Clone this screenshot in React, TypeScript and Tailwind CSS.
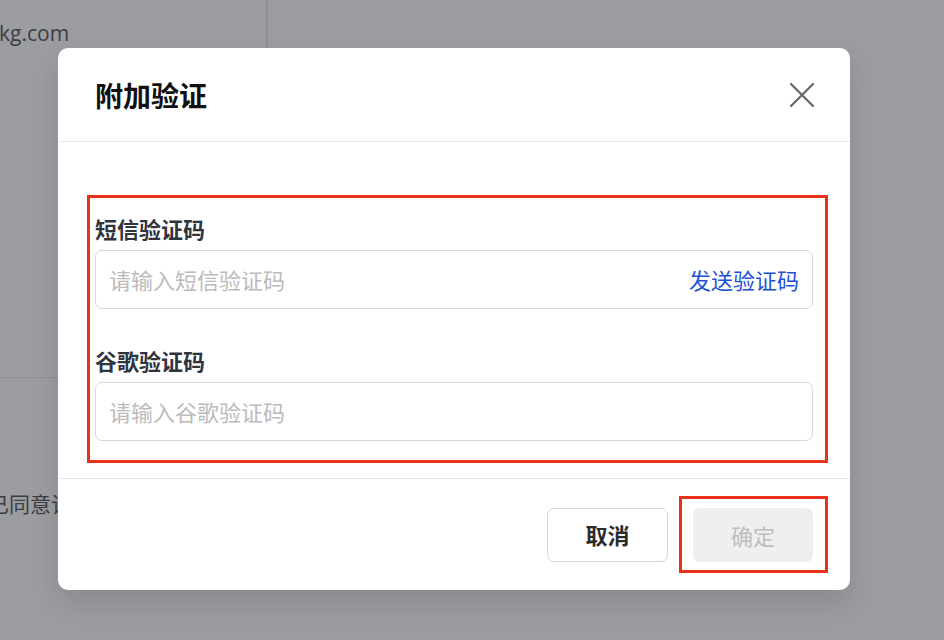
import React, { useState } from "react";

const FONT = { fontFamily: '"Noto Sans CJK SC", "Noto Sans", sans-serif' };

const CloseIcon: React.FC = () => (
  <svg width="26" height="26" viewBox="0 0 26 26" fill="none">
    <path d="M2 2L24 24M24 2L2 24" stroke="#666" strokeWidth="2.2" strokeLinecap="round" />
  </svg>
);

const App: React.FC = () => {
  const [sms, setSms] = useState("");
  const [google, setGoogle] = useState("");
  const canSubmit = sms.length > 0 && google.length > 0;

  return (
    <div className="relative w-[944px] h-[640px] overflow-hidden bg-[#9c9da1]" style={FONT}>
      {/* page behind the mask */}
      <div className="flex flex-col h-full text-[#3c3d41]">
        <div className="flex h-[48px]">
          <div className="w-[268px] border-r-2 border-[#8f9094] pt-[20px] overflow-hidden">
            <span className="block -ml-[12px] text-[21px] leading-[26px] whitespace-nowrap" style={{ fontFamily: '"Open Sans", "Noto Sans", sans-serif' }}>
              xkg.com
            </span>
          </div>
        </div>
        <div className="h-[329px]" />
        <div className="w-[60px] border-t border-[#8f9094]" />
        <div className="h-[110px]" />
        <div className="overflow-hidden">
          <span className="block -ml-[12px] text-[21px] leading-[30px] whitespace-nowrap">已同意该</span>
        </div>
      </div>

      {/* dialog */}
      <div className="absolute left-[58px] top-[48px] w-[792px] h-[542px] rounded-[10px] bg-white flex flex-col shadow-[0_14px_30px_rgba(0,0,0,0.12)]">
        <div className="h-[94px] flex items-center justify-between pl-[37px] pr-[35px] border-b border-[#e8e8e8]">
          <h2 className="text-[28px] font-bold text-[#111] leading-none">附加验证</h2>
          <button className="w-[26px] h-[26px] flex items-center justify-center">
            <CloseIcon />
          </button>
        </div>

        <div className="pt-[53px] pb-[15px] pl-[29px] pr-[22px] border-b border-[#e8e8e8]">
          <div className="border-[3px] border-[#e8321c] pl-[5px] pr-[12px] pt-[15px] pb-[19px]">
            <label className="block text-[22px] leading-[30px] font-semibold text-[#30343f] mb-[7px]">短信验证码</label>
            <div className="flex items-center h-[59px] border-[1.5px] border-[#d9d9d9] rounded-[7px] pl-[13px] pr-[13px]">
              <input
                value={sms}
                onChange={(e) => setSms(e.target.value)}
                placeholder="请输入短信验证码"
                className="flex-1 min-w-0 text-[22px] outline-none bg-transparent text-[#333] placeholder:text-[#bbbbbb]"
              />
              <button className="text-[22px] text-[#2050d4] whitespace-nowrap">发送验证码</button>
            </div>

            <label className="block text-[22px] leading-[30px] font-semibold text-[#30343f] mt-[36px] mb-[7px]">谷歌验证码</label>
            <div className="flex items-center h-[59px] border-[1.5px] border-[#d9d9d9] rounded-[7px] pl-[13px] pr-[13px]">
              <input
                value={google}
                onChange={(e) => setGoogle(e.target.value)}
                placeholder="请输入谷歌验证码"
                className="flex-1 min-w-0 text-[22px] outline-none bg-transparent text-[#333] placeholder:text-[#bbbbbb]"
              />
            </div>
          </div>
        </div>

        <div className="flex-1 flex items-center justify-end gap-[11px] pr-[22px]">
          <button className="w-[121px] h-[54px] rounded-[7px] border-[1.5px] border-[#d6d6d6] text-[22px] font-semibold text-[#2b2b2b]">
            取消
          </button>
          <div className="border-[3px] border-[#e8321c] pl-[11px] pr-[12px] pt-[9px] pb-[8px]">
            <button
              disabled={!canSubmit}
              className={
                canSubmit
                  ? "w-[120px] h-[54px] rounded-[7px] bg-[#2050d4] text-[22px] text-white"
                  : "w-[120px] h-[54px] rounded-[7px] bg-[#efefef] text-[22px] text-[#bdbdbd]"
              }
            >
              确定
            </button>
          </div>
        </div>
      </div>
    </div>
  );
};

export default App;
